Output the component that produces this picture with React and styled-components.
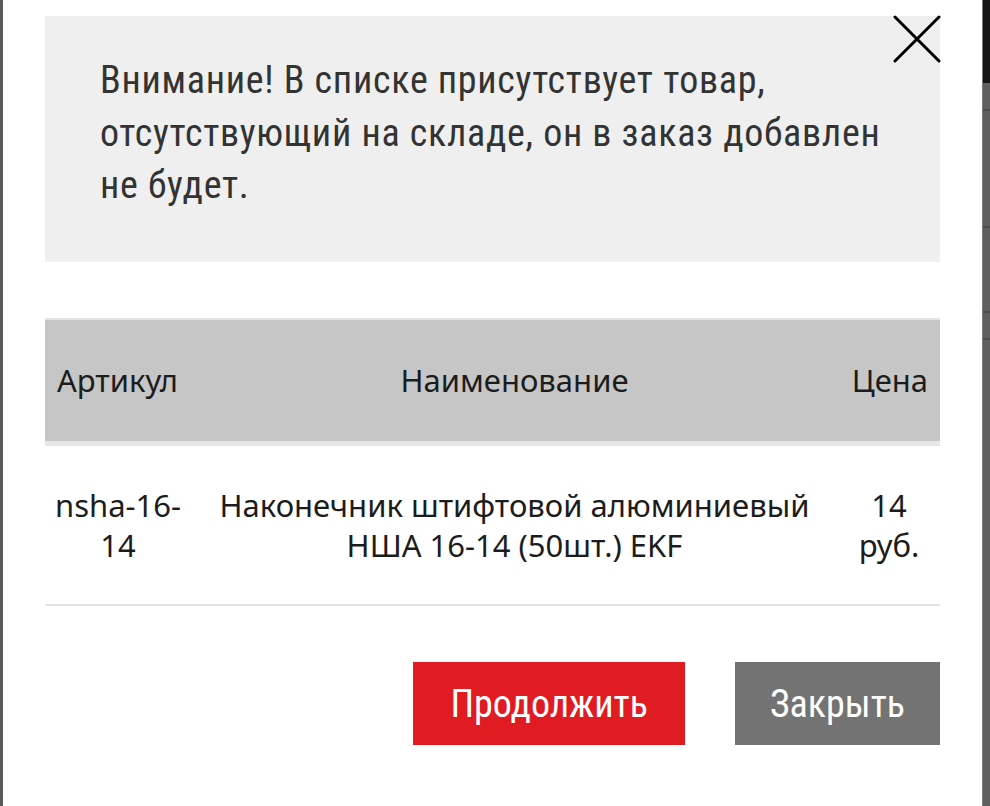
import styled, { createGlobalStyle } from 'styled-components';

const GlobalStyle = createGlobalStyle`
  html, body {
    margin: 0;
    padding: 0;
    background: #fff;
  }
  * {
    box-sizing: border-box;
  }
`;

const condensed = `"Roboto Condensed", "Liberation Sans Narrow", "DejaVu Sans Condensed", sans-serif`;
const geometric = `"Noto Sans", "Open Sans", sans-serif`;

const items = [
  {
    sku: 'nsha-16-14',
    name: 'Наконечник штифтовой алюминиевый НША 16-14 (50шт.) EKF',
    price: '14 руб.',
  },
];

export default function App() {
  return (
    <>
      <GlobalStyle />
      <Screen>
        <LeftShade />
        <Modal>
          <Notice>
            <NoticeText>
              Внимание! В списке присутствует товар, отсутствующий на складе, он в заказ добавлен не будет.
            </NoticeText>
            <CloseButton aria-label="Закрыть">
              <svg width="48" height="48" viewBox="0 0 48 48">
                <path d="M2 2 L46 46 M46 2 L2 46" stroke="#000" strokeWidth="3" strokeLinecap="round" />
              </svg>
            </CloseButton>
          </Notice>
          <Table>
            <thead>
              <tr>
                <HeadCell $align="left">Артикул</HeadCell>
                <HeadCell>Наименование</HeadCell>
                <HeadCell $align="right">Цена</HeadCell>
              </tr>
            </thead>
            <tbody>
              {items.map((item) => (
                <tr key={item.sku}>
                  <Cell $width="146px">{item.sku}</Cell>
                  <Cell>{item.name}</Cell>
                  <Cell $width="102px">{item.price}</Cell>
                </tr>
              ))}
            </tbody>
          </Table>
          <Actions>
            <ActionButton $variant="primary" $pad="37px">Продолжить</ActionButton>
            <ActionButton $pad="35px">Закрыть</ActionButton>
          </Actions>
        </Modal>
        <RightShade>
          <ShadeTop />
          <ShadeLine $h="28px" />
          <ShadeLine $h="117px" />
          <ShadeLine $h="85px" />
          <ShadeLine $h="27px" />
          <ShadeFill />
        </RightShade>
      </Screen>
    </>
  );
}

const Screen = styled.div`
  display: flex;
  height: 806px;
  overflow: hidden;
`;

const LeftShade = styled.div`
  width: 3px;
  flex: none;
  background: #5a5a5a;
`;

const RightShade = styled.div`
  width: 8px;
  flex: none;
  display: flex;
  flex-direction: column;
  background: #5f5f5f;
  border-left: 1px solid #7a7a7a;
`;

const ShadeTop = styled.div`
  height: 83px;
  background: #161616;
`;

const ShadeLine = styled.div`
  height: ${(p) => p.$h};
  border-bottom: 2px solid #4e4e4e;
`;

const ShadeFill = styled.div`
  flex: 1;
`;

const Modal = styled.div`
  flex: 1;
  min-width: 0;
  background: #fff;
  padding: 16px 42px 0 42px;
  display: flex;
  flex-direction: column;
`;

const Notice = styled.div`
  position: relative;
  flex: none;
  background: #efefef;
  padding: 38px 40px 0 55px;
  height: 246px;
`;

const NoticeText = styled.p`
  margin: 0;
  font-family: ${condensed};
  font-size: 38px;
  line-height: 52.5px;
  letter-spacing: 0.7px;
  color: #333;
`;

const CloseButton = styled.button`
  position: absolute;
  top: -1px;
  right: -1px;
  width: 48px;
  height: 48px;
  padding: 0;
  border: 0;
  background: transparent;
  cursor: pointer;
  svg {
    display: block;
  }
`;

const Table = styled.table`
  margin-top: 56px;
  width: 100%;
  border-collapse: collapse;
  font-family: ${geometric};
  color: #1c1c1c;
  font-size: 31px;
`;

const HeadCell = styled.th`
  background: #c6c6c6;
  border-top: 2px solid #e4e4e4;
  border-bottom: 5px solid #e6e6e6;
  height: 124px;
  font-weight: 400;
  text-align: ${(p) => p.$align || 'center'};
  padding: 0 12px;
`;

const Cell = styled.td`
  width: ${(p) => p.$width || 'auto'};
  height: 162px;
  text-align: center;
  line-height: 40px;
  padding: 0 4px;
  border-bottom: 2px solid #e2e2e2;
`;

const Actions = styled.div`
  display: flex;
  justify-content: flex-end;
  gap: 50px;
  margin-top: 56px;
`;

const ActionButton = styled.button`
  height: 83px;
  padding: 0 ${(p) => p.$pad};
  border: 0;
  font-family: ${condensed};
  font-size: 38px;
  color: #fff;
  background: ${(p) => (p.$variant === 'primary' ? '#e01b22' : '#737373')};
  cursor: pointer;
`;
